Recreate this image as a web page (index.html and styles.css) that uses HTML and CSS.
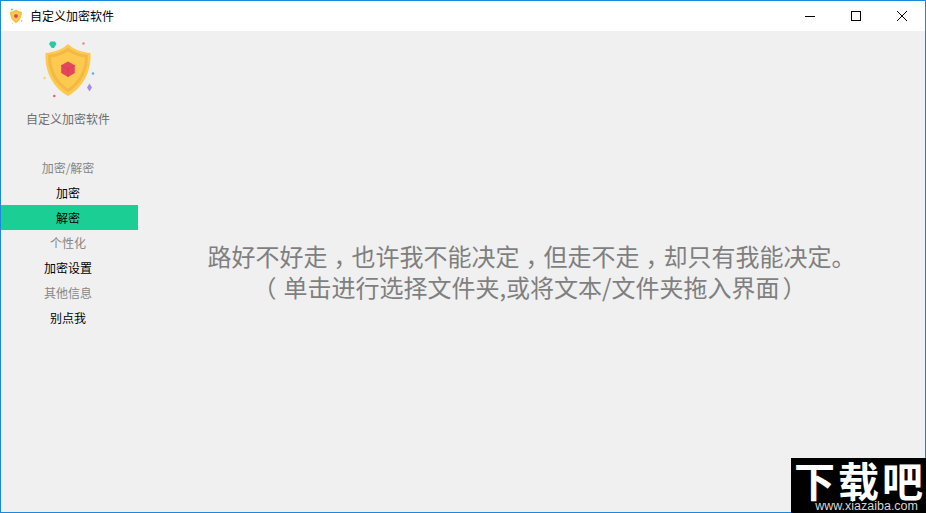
FILE: index.html
```html
<!doctype html>
<html lang="zh-CN">
<head>
    <meta charset="UTF-8">
    <title>自定义加密软件</title>
    <link rel="stylesheet" href="styles.css">
</head>
<body>
    <svg class="defs" width="0" height="0">
        <symbol id="shield" viewBox="0 0 60 60">
            <path d="M30 5 C35 10 44 13.500 52.500 14 C53.500 31 46 48 30 57 C14 48 6.500 31 7.500 14 C16 13.500 25 10 30 5 Z" fill="#fdc94f"/>
            <path d="M30 10.500 C35 14 42 16.500 48.500 17.300 C48.500 31 42 44 30 51.500 C18 44 11.500 31 11.500 17.300 C18 16.500 25 14 30 10.500 Z" fill="none" stroke="#f3b944" stroke-width="3"/>
            <path d="M30 22.500 L36.800 26.300 V34 L30 38 L23.200 34 V26.300 Z" fill="#e4475b"/>
            <path d="M30 30 L36.800 26.300 M30 30 L23.200 26.300 M30 30 V38" stroke="#cf3d55" stroke-width="0.700" fill="none"/>
            <path d="M12.500 2.500 H17 L18.500 5 L16 9 H13.800 L11 5 Z" fill="#2cc8a0"/>
            <circle cx="45.500" cy="4.500" r="1.200" fill="#f2836b"/>
            <circle cx="55" cy="34.500" r="1.300" fill="#6ea6ee"/>
            <circle cx="6.500" cy="39" r="1.200" fill="#fbcf62"/>
            <circle cx="16.300" cy="57" r="1.300" fill="#ee5a6a"/>
            <path d="M51.500 44.500 L54 48.500 L51.500 52.500 L49 48.500 Z" fill="#a78bea"/>
        </symbol>
    </svg>

    <div class="window">
        <header class="titlebar">
            <svg class="titlebar__icon"><use href="#shield"/></svg>
            <span class="titlebar__name">自定义加密软件</span>
            <div class="titlebar__buttons">
                <button class="titlebar__btn" type="button" aria-label="minimize">
                    <svg width="10" height="10" viewBox="0 0 10 10"><path d="M0 5.500 H10" stroke="#000" fill="none"/></svg>
                </button>
                <button class="titlebar__btn" type="button" aria-label="maximize">
                    <svg width="10" height="10" viewBox="0 0 10 10"><rect x="0.500" y="0.500" width="9" height="9" stroke="#000" fill="none"/></svg>
                </button>
                <button class="titlebar__btn" type="button" aria-label="close">
                    <svg width="10" height="10" viewBox="0 0 10 10"><path d="M0 0 L10 10 M10 0 L0 10" stroke="#000" fill="none"/></svg>
                </button>
            </div>
        </header>

        <div class="app">
            <aside class="sidebar">
                <svg class="sidebar__logo"><use href="#shield"/></svg>
                <p class="sidebar__name">自定义加密软件</p>
                <nav class="menu">
                    <div class="menu__item menu__item--head">加密/解密</div>
                    <div class="menu__item">加密</div>
                    <div class="menu__item menu__item--active">解密</div>
                    <div class="menu__item menu__item--head">个性化</div>
                    <div class="menu__item">加密设置</div>
                    <div class="menu__item menu__item--head">其他信息</div>
                    <div class="menu__item">别点我</div>
                </nav>
            </aside>
            <main class="drop">
                <p class="drop__text">路好不好走<span class="mark mark--comma">&#xFF0C;</span>也许我不能决定<span class="mark mark--comma">&#xFF0C;</span>但走不走<span class="mark mark--comma">&#xFF0C;</span>却只有我能决定&#x3002;<br><span class="mark mark--open">&#xFF08;</span>单击进行选择文件夹,或将文本/文件夹拖入界面<span class="mark mark--close">&#xFF09;</span></p>
            </main>
        </div>
    </div>

    <div class="watermark">
        <div class="watermark__name">下载吧</div>
        <div class="watermark__url">www.xiazaiba.com</div>
    </div>
</body>
</html>
```

FILE: styles.css
```css
* {
    box-sizing: border-box;
}

html, body {
    height: 100%;
}

body {
    margin: 0;
    font-family: "Noto Sans CJK SC", "Noto Sans", sans-serif;
    font-size: 12px;
    overflow: hidden;
}

.defs {
    position: absolute;
}

.window {
    height: 100vh;
    display: flex;
    flex-direction: column;
    border: 1px solid #1a88dc;
    background-color: #f0f0f0;
}

.titlebar {
    height: 30px;
    flex: none;
    display: flex;
    align-items: center;
    background-color: #fff;
}

.titlebar__icon {
    width: 16px;
    height: 16px;
    margin-left: 7px;
}

.titlebar__name {
    margin-left: 6px;
    color: #000;
    line-height: 16px;
}

.titlebar__buttons {
    margin-left: auto;
    display: flex;
}

.titlebar__btn {
    width: 46px;
    height: 30px;
    padding: 0;
    border: 0;
    background: none;
    display: flex;
    align-items: center;
    justify-content: center;
}

.app {
    flex: 1;
    display: flex;
    min-height: 0;
}

.sidebar {
    width: 137px;
    flex: none;
    display: flex;
    flex-direction: column;
}

.sidebar__logo {
    width: 60px;
    height: 60px;
    margin: 8px 0 0 37px;
}

.sidebar__name {
    margin: 11px 3px 0 0;
    height: 18px;
    line-height: 18px;
    text-align: center;
    color: #6e6e6e;
}

.menu {
    margin-top: 27px;
}

.menu__item {
    height: 25px;
    line-height: 25px;
    padding-right: 3px;
    text-align: center;
    color: #000;
}

.menu__item--head {
    color: #868686;
}

.menu__item--active {
    background-color: #1bcf94;
}

.drop {
    flex: 1;
    display: flex;
    align-items: center;
    justify-content: center;
    cursor: pointer;
}

.drop__text {
    margin: 0 0 1px 0;
    line-height: 31px;
    font-size: 24px;
    color: #7f7f7f;
    text-align: center;
    white-space: nowrap;
}

/* commas and brackets sit in the middle of their cell */
.mark {
    display: inline-block;
}

.mark--comma {
    transform: translateX(6px);
}

.mark--open {
    transform: translateX(-7px);
}

.mark--close {
    transform: translateX(3px);
}

.watermark {
    position: absolute;
    right: 0;
    bottom: 0;
    width: 135px;
    height: 55px;
    background-color: #000;
    color: #fff;
}

.watermark__name {
    height: 43px;
    line-height: 42px;
    padding-left: 3px;
    font-size: 41px;
    font-weight: 700;
    letter-spacing: 3px;
    white-space: nowrap;
}

.watermark__url {
    height: 12px;
    line-height: 11px;
    padding-right: 8px;
    text-align: right;
    font-family: "Liberation Sans", sans-serif;
    font-size: 12.500px;
    color: #d8d8d8;
    white-space: nowrap;
}
```
